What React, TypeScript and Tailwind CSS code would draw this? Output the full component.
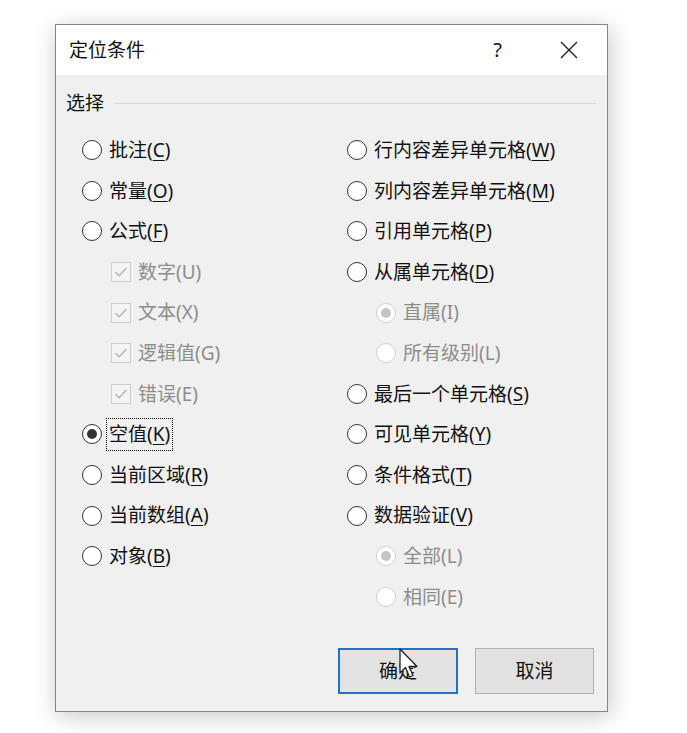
import React from 'react';

type Item = {
  kind: 'radio' | 'check';
  label: string;
  hot: string;
  sub?: boolean;
  checked?: boolean;
  disabled?: boolean;
  focused?: boolean;
};

const leftItems: Item[] = [
  { kind: 'radio', label: '批注', hot: 'C' },
  { kind: 'radio', label: '常量', hot: 'O' },
  { kind: 'radio', label: '公式', hot: 'F' },
  { kind: 'check', label: '数字', hot: 'U', sub: true, checked: true, disabled: true },
  { kind: 'check', label: '文本', hot: 'X', sub: true, checked: true, disabled: true },
  { kind: 'check', label: '逻辑值', hot: 'G', sub: true, checked: true, disabled: true },
  { kind: 'check', label: '错误', hot: 'E', sub: true, checked: true, disabled: true },
  { kind: 'radio', label: '空值', hot: 'K', checked: true, focused: true },
  { kind: 'radio', label: '当前区域', hot: 'R' },
  { kind: 'radio', label: '当前数组', hot: 'A' },
  { kind: 'radio', label: '对象', hot: 'B' },
];

const rightItems: Item[] = [
  { kind: 'radio', label: '行内容差异单元格', hot: 'W' },
  { kind: 'radio', label: '列内容差异单元格', hot: 'M' },
  { kind: 'radio', label: '引用单元格', hot: 'P' },
  { kind: 'radio', label: '从属单元格', hot: 'D' },
  { kind: 'radio', label: '直属', hot: 'I', sub: true, checked: true, disabled: true },
  { kind: 'radio', label: '所有级别', hot: 'L', sub: true, disabled: true },
  { kind: 'radio', label: '最后一个单元格', hot: 'S' },
  { kind: 'radio', label: '可见单元格', hot: 'Y' },
  { kind: 'radio', label: '条件格式', hot: 'T' },
  { kind: 'radio', label: '数据验证', hot: 'V' },
  { kind: 'radio', label: '全部', hot: 'L', sub: true, checked: true, disabled: true },
  { kind: 'radio', label: '相同', hot: 'E', sub: true, disabled: true },
];

function Radio({ checked, disabled }: { checked?: boolean; disabled?: boolean }) {
  return (
    <span
      className={
        'flex h-[20px] w-[20px] shrink-0 items-center justify-center rounded-full border-[1.5px] bg-white ' +
        (disabled ? 'border-[#cfcfcf]' : 'border-[#333333]')
      }
    >
      {checked && (
        <span className={'h-[10px] w-[10px] rounded-full ' + (disabled ? 'bg-[#c4c4c4]' : 'bg-[#333333]')} />
      )}
    </span>
  );
}

function Check({ checked }: { checked?: boolean }) {
  return (
    <span className="flex h-[20px] w-[20px] shrink-0 items-center justify-center border border-[#cccccc] bg-[#f4f4f4]">
      {checked && (
        <svg width="16" height="16" viewBox="0 0 16 16" fill="none">
          <path d="M2.5 8.2 L6.2 11.8 L13.5 4" stroke="#b3b3b3" strokeWidth="1.4" />
        </svg>
      )}
    </span>
  );
}

function Row({ item }: { item: Item }) {
  return (
    <div className={'flex h-[40.6px] items-center ' + (item.sub ? 'pl-[29px]' : '')}>
      {item.kind === 'radio' ? (
        <Radio checked={item.checked} disabled={item.disabled} />
      ) : (
        <Check checked={item.checked} />
      )}
      <span
        className={
          'ml-[4px] flex h-[33px] items-center border px-[2px] ' +
          (item.focused ? 'border-dotted border-black' : 'border-transparent') +
          ' ' +
          (item.disabled ? 'text-[#8c8c8c]' : 'text-[#111111]')
        }
      >
        {item.label}(
        {item.disabled ? item.hot : <span className="underline underline-offset-[3px]">{item.hot}</span>})
      </span>
    </div>
  );
}

function Cursor() {
  return (
    <svg
      className="pointer-events-none absolute left-[399px] top-[648px]"
      width="22"
      height="32"
      viewBox="0 0 22 32"
    >
      <path
        d="M1 1 L1 25 L6.5 19.5 L10.5 29 L14 27.5 L10 18.5 L18 18.5 Z"
        fill="white"
        stroke="#222"
        strokeWidth="1.3"
        strokeLinejoin="round"
      />
    </svg>
  );
}

export default function App() {
  return (
    <div
      className="relative min-h-[733px] w-[687px] bg-white pl-[55px] pt-[24px] text-[19px]"
      style={{ fontFamily: '"Noto Sans", "Noto Sans CJK SC", sans-serif' }}
    >
      <div className="flex h-[688px] w-[553px] flex-col border border-[#858585] bg-[#f0f0f0] shadow-[2px_4px_22px_rgba(0,0,0,0.22)]">
        {/* 标题栏 */}
        <div className="flex h-[50px] shrink-0 items-center bg-white pl-[13px] pr-[29px] text-[#111]">
          <span className="text-[19px]">定位条件</span>
          <span className="ml-auto mr-[58px] text-[20px]">?</span>
          <svg width="18" height="18" viewBox="0 0 18 18">
            <path d="M1 1 L17 17 M17 1 L1 17" stroke="#222" strokeWidth="1.4" />
          </svg>
        </div>

        <div className="flex flex-1 flex-col pt-[16px]">
          <div className="flex h-[24px] items-center pl-[10px] pr-[11px]">
            <span className="text-[#111]">选择</span>
            <span className="ml-[11px] h-px flex-1 bg-[#d7d7d7]" />
          </div>

          <div className="mt-[15px] grid grid-cols-[265px_1fr] pl-[26px]">
            <div className="flex flex-col">
              {leftItems.map((it, i) => (
                <Row key={i} item={it} />
              ))}
            </div>
            <div className="flex flex-col">
              {rightItems.map((it, i) => (
                <Row key={i} item={it} />
              ))}
            </div>
          </div>

          <div className="mt-auto flex justify-end gap-[17px] pb-[17px] pr-[13px]">
            <button className="flex h-[46px] w-[120px] items-center justify-center border-2 border-[#1c74c9] bg-[#e3e3e3] text-[#111]">
              确定
            </button>
            <button className="flex h-[46px] w-[119px] items-center justify-center border border-[#b0b0b0] bg-[#e1e1e1] text-[#111]">
              取消
            </button>
          </div>
        </div>
      </div>
      <Cursor />
    </div>
  );
}
